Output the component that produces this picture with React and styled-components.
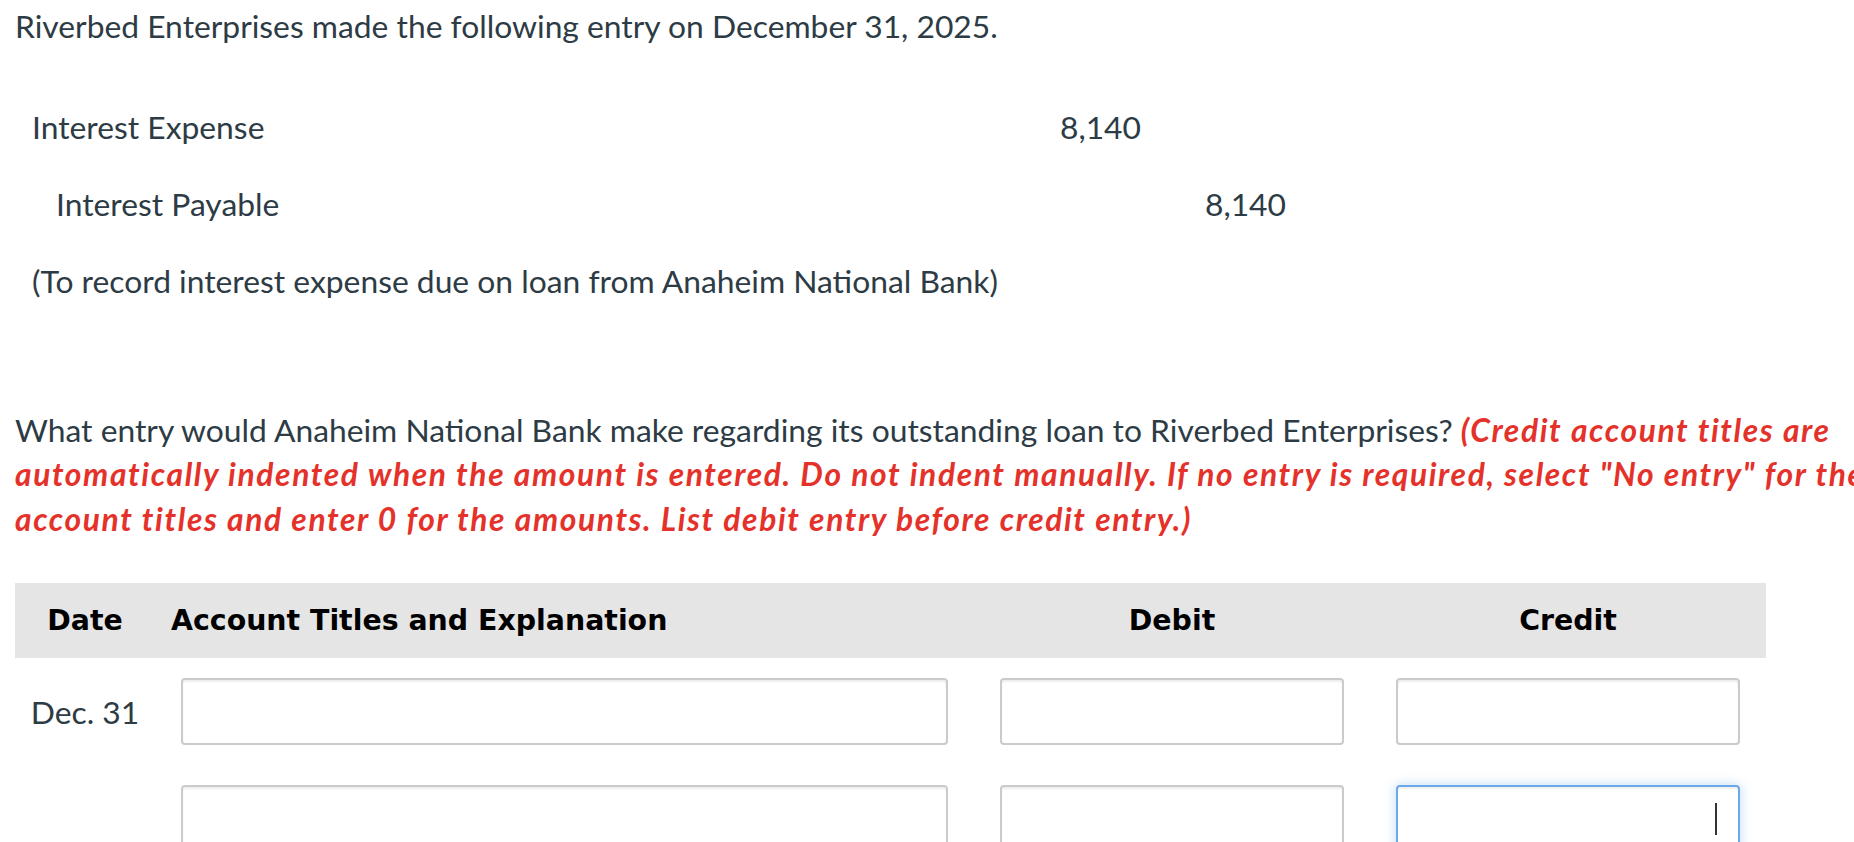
import React from 'react';
import styled, { createGlobalStyle } from 'styled-components';

const GlobalStyle = createGlobalStyle`
  html, body {
    margin: 0;
    padding: 0;
    background: #fff;
    overflow: hidden;
  }
  body {
    font-family: Lato, "Open Sans", sans-serif;
    color: #2d3b45;
  }
`;

const Page = styled.div`
  width: 1900px;
  padding: 8px 15px 0;
  font-size: 31.8px;
`;

const Intro = styled.p`
  margin: 0;
  line-height: 36px;
`;

const EntryTable = styled.div`
  display: grid;
  grid-template-columns: 985px 141px 145px;
  margin-top: 65px;
`;

const EntryCell = styled.div`
  height: 77px;
  line-height: 36px;
  white-space: nowrap;
  padding-left: ${({ $indent }) => ($indent ? 41 : 17)}px;
  text-align: ${({ $amount }) => ($amount ? 'right' : 'left')};
`;

const Question = styled.p`
  margin: 68px 0 0;
  line-height: 44.4px;
`;

const Hint = styled.span`
  color: #e4322b;
  font-weight: 700;
  font-style: italic;
  letter-spacing: 1.6px;
`;

const Journal = styled.div`
  width: 1751px;
  margin-top: 42px;
`;

const JournalRow = styled.div`
  display: grid;
  grid-template-columns: 140px 819px 396px 396px;
  align-items: center;
`;

const HeadRow = styled(JournalRow)`
  height: 75px;
  background: #e5e5e5;
  margin-bottom: 20px;
`;

const HeadCell = styled.div`
  font-family: "DejaVu Sans", Verdana, sans-serif;
  font-weight: 700;
  font-size: 28.4px;
  color: #000;
  text-align: ${({ $align }) => $align || 'center'};
  padding-left: ${({ $align }) => ($align === 'left' ? 16 : 0)}px;
`;

const DateCell = styled.div`
  text-align: center;
`;

const FieldCell = styled.div`
  padding: 0 26px;
  position: relative;
`;

const Field = styled.input`
  display: block;
  box-sizing: border-box;
  width: 100%;
  height: 67px;
  border: 2px solid ${({ $focused }) => ($focused ? '#6ea8e8' : '#cbcbcb')};
  border-radius: 4px;
  background: #fff;
  outline: none;
  box-shadow: ${({ $focused }) =>
    $focused
      ? 'inset 0 2px 2px rgba(0,0,0,.06), 0 0 12px rgba(102,175,233,.45)'
      : 'inset 0 2px 2px rgba(0,0,0,.07)'};
  font: inherit;
`;

const Caret = styled.span`
  position: absolute;
  right: 49px;
  top: 18px;
  width: 2px;
  height: 32px;
  background: #333;
`;

const BodyRow = styled(JournalRow)`
  margin-bottom: 40px;
`;

const rows = [
  { date: 'Dec. 31', focused: false },
  { date: '', focused: true },
];

const App = () => (
  <Page>
    <GlobalStyle />
    <Intro>Riverbed Enterprises made the following entry on December 31, 2025.</Intro>
    <EntryTable>
      <EntryCell>Interest Expense</EntryCell>
      <EntryCell $amount>8,140</EntryCell>
      <EntryCell $amount />
      <EntryCell $indent>Interest Payable</EntryCell>
      <EntryCell $amount />
      <EntryCell $amount>8,140</EntryCell>
      <EntryCell>(To record interest expense due on loan from Anaheim National Bank)</EntryCell>
      <EntryCell $amount />
      <EntryCell $amount />
    </EntryTable>
    <Question>
      What entry would Anaheim National Bank make regarding its outstanding loan to Riverbed Enterprises?{' '}
      <Hint>
        (Credit account titles are automatically indented when the amount is entered. Do not indent manually. If no
        entry is required, select "No entry" for the account titles and enter 0 for the amounts. List debit entry
        before credit entry.)
      </Hint>
    </Question>
    <Journal>
      <HeadRow>
        <HeadCell>Date</HeadCell>
        <HeadCell $align="left">Account Titles and Explanation</HeadCell>
        <HeadCell>Debit</HeadCell>
        <HeadCell>Credit</HeadCell>
      </HeadRow>
      {rows.map(({ date, focused }, i) => (
        <BodyRow key={i}>
          <DateCell>{date}</DateCell>
          <FieldCell>
            <Field type="text" />
          </FieldCell>
          <FieldCell>
            <Field type="text" />
          </FieldCell>
          <FieldCell>
            <Field type="text" $focused={focused} />
            {focused && <Caret />}
          </FieldCell>
        </BodyRow>
      ))}
    </Journal>
  </Page>
);

export default App;
